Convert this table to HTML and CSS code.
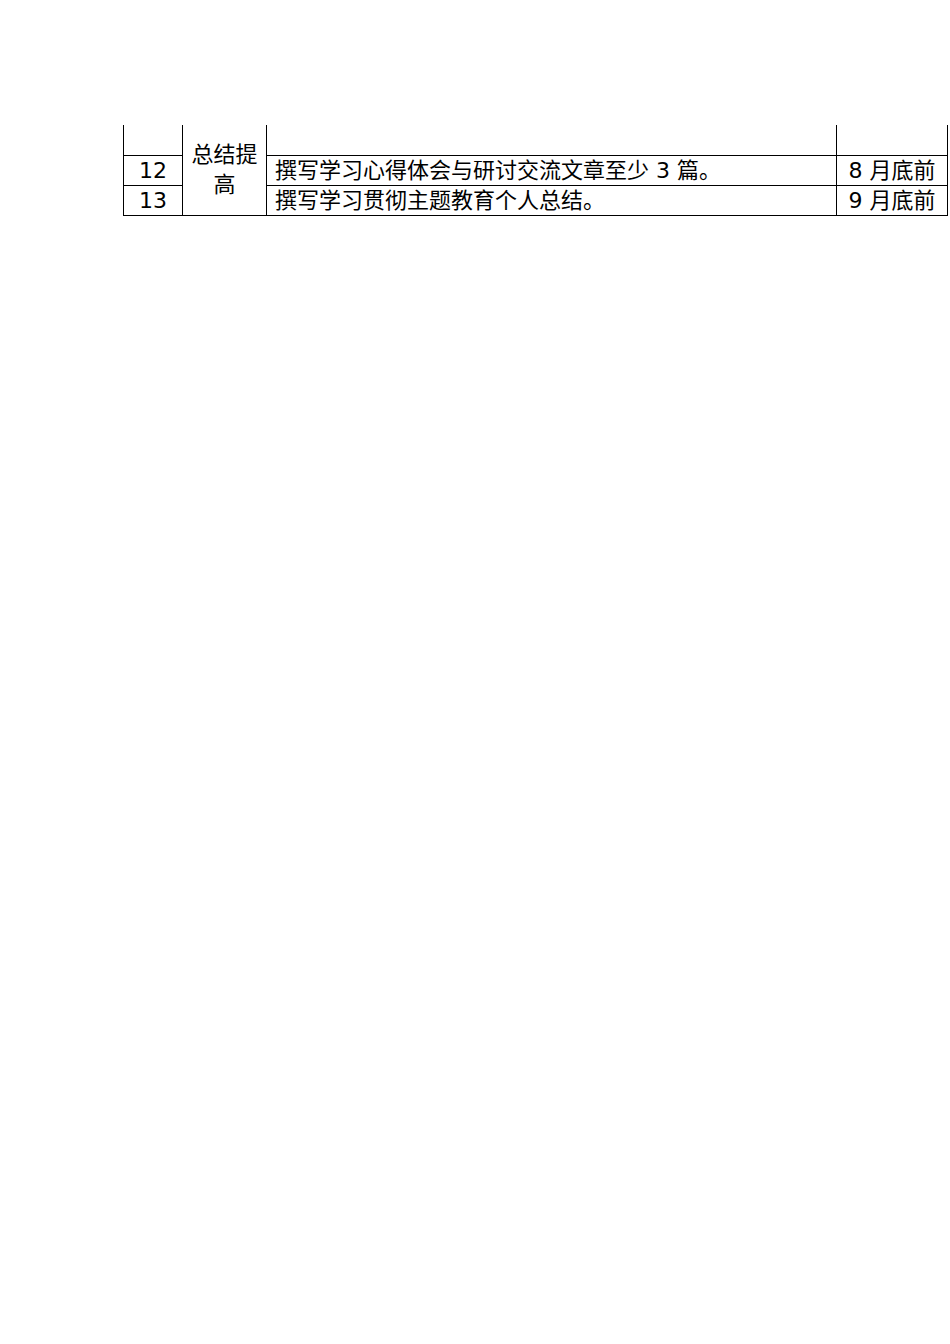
FILE: index.html
```html
<!DOCTYPE html>
<html lang="zh-CN">
<head>
<meta charset="utf-8">
<title>学习计划</title>
<link rel="stylesheet" href="styles.css">
</head>
<body>
<div class="page">
  <table class="plan">
    <colgroup>
      <col class="c-no">
      <col class="c-stage">
      <col class="c-task">
      <col class="c-date">
    </colgroup>
    <tbody>
      <tr class="first">
        <td class="no"></td>
        <td class="stage" rowspan="3">总结提高</td>
        <td class="task"></td>
        <td class="date"></td>
      </tr>
      <tr>
        <td class="no">12</td>
        <td class="task">撰写学习心得体会与研讨交流文章至少 3 篇。</td>
        <td class="date">8 月底前</td>
      </tr>
      <tr>
        <td class="no">13</td>
        <td class="task">撰写学习贯彻主题教育个人总结。</td>
        <td class="date">9 月底前</td>
      </tr>
    </tbody>
  </table>
</div>
</body>
</html>
```

FILE: styles.css
```css
html, body {
  margin: 0;
  padding: 0;
  background: #ffffff;
}

.page {
  width: 950px;
  height: 1344px;
  padding: 125px 0 0 123px;
  box-sizing: border-box;
}

.plan {
  border-collapse: collapse;
  table-layout: fixed;
  width: 824px;
  font-family: "DejaVu Sans", "Noto Sans CJK SC", sans-serif;
  font-size: 22px;
  color: #000000;
}

.c-no { width: 59px; }
.c-stage { width: 84px; }
.c-task { width: 570px; }
.c-date { width: 111px; }

.plan td {
  border: 1px solid #000000;
  height: 29px;
  padding: 0;
  line-height: 29px;
  vertical-align: middle;
  white-space: nowrap;
}

.plan tr.first td {
  border-top: none;
  height: 30px;
}

.no {
  text-align: center;
}

.stage {
  text-align: center;
  white-space: normal !important;
  line-height: 30px !important;
  padding: 0 2px !important;
}

.task {
  text-align: left;
  padding-left: 8px !important;
}

.date {
  text-align: center;
}
```
